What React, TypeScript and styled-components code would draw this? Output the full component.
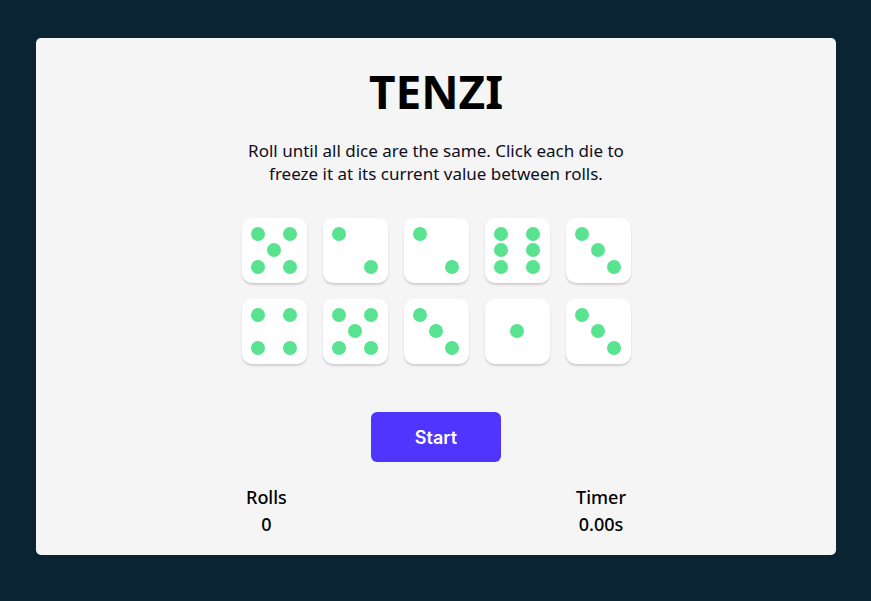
import React from "react";
import styled, { createGlobalStyle } from "styled-components";

const Global = createGlobalStyle`
  html, body { margin: 0; padding: 0; background: #0B2434; }
  body { font-family: "Noto Sans", "Open Sans", sans-serif; }
  * { box-sizing: border-box; }
`;

const Page = styled.div`
  width: 871px;
  height: 601px;
  padding: 38px 35px 46px 36px;
`;

const Card = styled.main`
  width: 800px;
  height: 517px;
  background: #F5F5F5;
  border-radius: 5px;
  display: flex;
  flex-direction: column;
  align-items: center;
  padding-top: 21px;
`;

const Title = styled.h1`
  margin: 0;
  font-size: 46px;
  font-weight: 700;
  line-height: 64px;
  color: #000;
`;

const Desc = styled.p`
  margin: 16px 0 0;
  width: 400px;
  text-align: center;
  font-size: 17px;
  line-height: 23px;
  color: #0E0E1C;
`;

const DiceGrid = styled.div`
  margin-top: 33px;
  display: grid;
  grid-template-columns: repeat(5, 65px);
  grid-auto-rows: 65px;
  gap: 16px;
`;

const Die = styled.button`
  width: 65px;
  height: 65px;
  border: none;
  border-radius: 10px;
  background: #fff;
  box-shadow: 0 2px 2px rgba(0, 0, 0, 0.15);
  padding: 8px;
  display: grid;
  grid-template-columns: repeat(3, 1fr);
  grid-template-rows: repeat(3, 1fr);
  place-items: center;
  cursor: pointer;
`;

const Pip = styled.span<{ $r: number; $c: number }>`
  grid-row: ${(p) => p.$r};
  grid-column: ${(p) => p.$c};
  width: 14px;
  height: 14px;
  border-radius: 50%;
  background: #59E391;
`;

const Roll = styled.button`
  margin-top: 48px;
  width: 130px;
  height: 50px;
  border: none;
  border-radius: 6px;
  background: #5035FF;
  color: #fff;
  font-family: "Inter", "Noto Sans", sans-serif;
  font-size: 18px;
  font-weight: 600;
  cursor: pointer;
`;

const Stats = styled.div`
  margin-top: 22px;
  width: 380px;
  display: flex;
  justify-content: space-between;
`;

const Stat = styled.div`
  display: flex;
  flex-direction: column;
  align-items: center;
  font-size: 18px;
  font-weight: 500;
  line-height: 27px;
  color: #000;
`;

const layouts: Record<number, [number, number][]> = {
  1: [[2, 2]],
  2: [[1, 1], [3, 3]],
  3: [[1, 1], [2, 2], [3, 3]],
  4: [[1, 1], [1, 3], [3, 1], [3, 3]],
  5: [[1, 1], [1, 3], [2, 2], [3, 1], [3, 3]],
  6: [[1, 1], [1, 3], [2, 1], [2, 3], [3, 1], [3, 3]],
};

const values = [5, 2, 2, 6, 3, 4, 5, 3, 1, 3];

export default function App() {
  return (
    <>
      <Global />
      <Page>
        <Card>
          <Title>TENZI</Title>
          <Desc>
            Roll until all dice are the same. Click each die to freeze it at its
            current value between rolls.
          </Desc>
          <DiceGrid>
            {values.map((v, i) => (
              <Die key={i} aria-label={`Die with value ${v}`}>
                {layouts[v].map(([r, c], j) => (
                  <Pip key={j} $r={r} $c={c} />
                ))}
              </Die>
            ))}
          </DiceGrid>
          <Roll>Start</Roll>
          <Stats>
            <Stat>
              <span>Rolls</span>
              <span>0</span>
            </Stat>
            <Stat>
              <span>Timer</span>
              <span>0.00s</span>
            </Stat>
          </Stats>
        </Card>
      </Page>
    </>
  );
}
